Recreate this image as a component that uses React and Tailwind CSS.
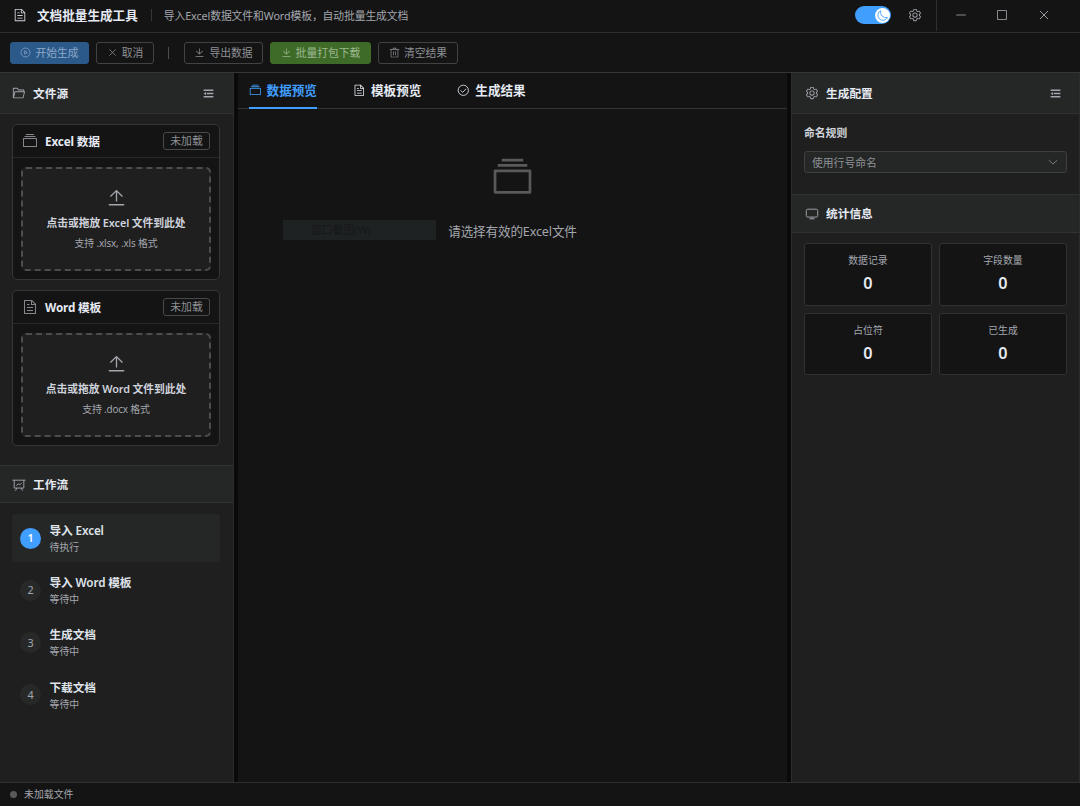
import { useState } from 'react';

// Icon outlines, all on a 1024 grid
const ICONS = {
  document:
    'M832 384H576V128H192v768h640zm-26.496-64L640 154.496V320zM160 64h480l256 256v608a32 32 0 0 1-32 32H160a32 32 0 0 1-32-32V96a32 32 0 0 1 32-32m160 448h384v64H320zm0-192h160v64H320zm0 384h384v64H320z',
  setting:
    'M600.704 64a32 32 0 0 1 30.464 22.208l35.2 109.376c14.784 7.232 28.928 15.36 42.432 24.512l112.384-24.192a32 32 0 0 1 34.432 15.36L944.32 364.8a32 32 0 0 1-4.032 37.504l-77.12 85.12a357 357 0 0 1 0 49.024l77.12 85.248a32 32 0 0 1 4.032 37.504l-88.704 153.6a32 32 0 0 1-34.432 15.296L708.8 803.904c-13.44 9.088-27.648 17.28-42.368 24.512l-35.264 109.376A32 32 0 0 1 600.704 960H423.296a32 32 0 0 1-30.464-22.208L357.696 828.48a352 352 0 0 1-42.56-24.64l-112.32 24.256a32 32 0 0 1-34.432-15.36L79.68 659.2a32 32 0 0 1 4.032-37.504l77.12-85.248a357 357 0 0 1 0-48.896l-77.12-85.248A32 32 0 0 1 79.68 364.8l88.704-153.6a32 32 0 0 1 34.432-15.296l112.32 24.256c13.568-9.152 27.776-17.408 42.56-24.64l35.2-109.312A32 32 0 0 1 423.232 64H600.64zm-23.424 64H446.72l-36.352 113.088-24.512 11.968a294 294 0 0 0-34.816 20.096l-22.656 15.36-116.224-25.088-65.28 113.152 79.68 88.192-1.92 27.136a293 293 0 0 0 0 40.192l1.92 27.136-79.808 88.192 65.344 113.152 116.224-25.024 22.656 15.296a294 294 0 0 0 34.816 20.096l24.512 11.968L446.72 896h130.688l36.48-113.152 24.448-11.904a288 288 0 0 0 34.752-20.096l22.592-15.296 116.288 25.024 65.28-113.152-79.744-88.192 1.92-27.136a293 293 0 0 0 0-40.256l-1.92-27.136 79.808-88.128-65.344-113.152-116.288 24.96-22.592-15.232a288 288 0 0 0-34.752-20.096l-24.448-11.904L577.344 128zM512 320a192 192 0 1 1 0 384 192 192 0 0 1 0-384m0 64a128 128 0 1 0 0 256 128 128 0 0 0 0-256',
  files:
    'M128 384v448h768V384zm-32-64h832a32 32 0 0 1 32 32v512a32 32 0 0 1-32 32H96a32 32 0 0 1-32-32V352a32 32 0 0 1 32-32m64-128h704v64H160zm96-128h512v64H256z',
  folder:
    'M878.08 448H241.92l-96 384h636.16zM832 384v-64H485.76L357.504 192H128v448l57.92-231.744A32 32 0 0 1 216.96 384zm-24.96 512H96a32 32 0 0 1-32-32V160a32 32 0 0 1 32-32h287.872l128.384 128H864a32 32 0 0 1 32 32v96h23.04a32 32 0 0 1 31.04 39.744l-112 448A32 32 0 0 1 807.04 896',
  download:
    'M160 832h704a32 32 0 1 1 0 64H160a32 32 0 1 1 0-64m384-253.696 236.288-236.352 45.248 45.248L508.8 704 192 387.2l45.248-45.248L480 584.704V128h64z',
  upload:
    'M160 832h704a32 32 0 1 1 0 64H160a32 32 0 1 1 0-64m384-578.304V704h-64V247.296L237.248 490.048 192 444.8 508.8 128l316.8 316.8-45.312 45.248z',
  trash:
    'M160 256H96a32 32 0 0 1 0-64h256V95.936a32 32 0 0 1 32-32h256a32 32 0 0 1 32 32V192h256a32 32 0 1 1 0 64h-64v672a32 32 0 0 1-32 32H192a32 32 0 0 1-32-32zm448-64v-64H416v64zM224 896h576V256H224zm192-128a32 32 0 0 1-32-32V416a32 32 0 0 1 64 0v320a32 32 0 0 1-32 32m192 0a32 32 0 0 1-32-32V416a32 32 0 0 1 64 0v320a32 32 0 0 1-32 32',
  fold: 'M896 192H128v128h768zm0 256H384v128h512zm0 256H128v128h768zM320 384 128 512l192 128z',
};

// Simple icons drawn with strokes instead of filled outlines
const LINES = {
  close: 'M218 218 806 806M806 218 218 806',
  play: 'M512 96a416 416 0 1 1 0 832 416 416 0 0 1 0-832M432 352v320l240-160z',
  check: 'M512 96a416 416 0 1 1 0 832 416 416 0 0 1 0-832M290 520l165 165 280-290',
  board: 'M32 160h960M160 160v576h704V160M352 736 256 928M672 736l96 192M320 560l130-140 110 90 150-160',
  monitor: 'M192 160h640a96 96 0 0 1 96 96v384a96 96 0 0 1-96 96H192a96 96 0 0 1-96-96V256a96 96 0 0 1 96-96M512 736v128M320 864h384',
  arrowDown: 'M150 350 512 690 874 350',
  minus: 'M100 512h824',
  square: 'M128 128h768v768H128z',
  moon: 'M380 130a400 400 0 1 0 530 530A420 420 0 0 1 380 130z',
};

function Icon({ name, className }) {
  if (LINES[name]) {
    return (
      <svg viewBox="0 0 1024 1024" fill="none" stroke="currentColor" strokeWidth="68" className={`shrink-0 ${className}`}>
        <path d={LINES[name]} />
      </svg>
    );
  }
  return (
    <svg viewBox="0 0 1024 1024" fill="currentColor" className={`shrink-0 ${className}`}>
      <path d={ICONS[name]} />
    </svg>
  );
}

function ToolButton({ icon, label, className }) {
  return (
    <button className={`flex h-[22px] items-center justify-center gap-[4px] rounded-[3px] border text-[10.8px] ${className}`}>
      <Icon name={icon} className="size-[11px]" />
      <span className="pt-[2px]">{label}</span>
    </button>
  );
}

function SectionHeader({ icon, title, foldable, className }) {
  return (
    <div className={`flex shrink-0 items-center border-b border-[#303232] bg-[#252727] ${className}`}>
      <Icon name={icon} className="size-[14px] text-[#a3a6ad]" />
      <span className="ml-[7px] pt-px text-[11.7px] font-bold text-[#e5eaf3]">{title}</span>
      {foldable && <Icon name="fold" className="ml-auto size-[13px] text-[#a3a6ad]" />}
    </div>
  );
}

function FileCard({ icon, title, text, hint }) {
  return (
    <div className="h-[156px] rounded-[5px] border border-[#343535] bg-[#141414]">
      <div className="flex h-[33px] items-center border-b border-[#282929] pr-[9px] pl-[9px]">
        <Icon name={icon} className="size-[16px] text-[#85878c]" />
        <span className="ml-[7px] pt-[2px] text-[11.7px] font-bold tracking-[-0.15px] text-[#e5eaf3]">{title}</span>
        <span className="ml-auto flex h-[18px] w-[47px] items-center justify-center rounded-[3px] border border-[#48494b] pt-px text-[10.8px] text-[#8d9095]">
          未加载
        </span>
      </div>
      <div className="mx-[8px] mt-[9px] flex h-[104px] flex-col items-center rounded-[5px] border-2 border-dashed border-[#4c4d4f] bg-[#1f1f1f]">
        <Icon name="upload" className="mt-[18px] size-[21px] text-[#a3a6ad]" />
        <p className="mt-[7px] text-[10.8px] leading-[16px] font-semibold tracking-[-0.08px] text-[#cfd3dc]">{text}</p>
        <p className="mt-[5px] text-[9.9px] leading-[14px] tracking-[-0.15px] text-[#a3a6ad]">{hint}</p>
      </div>
    </div>
  );
}

const STEPS = [
  { title: '导入 Excel', status: '待执行' },
  { title: '导入 Word 模板', status: '等待中' },
  { title: '生成文档', status: '等待中' },
  { title: '下载文档', status: '等待中' },
];

const TABS = [
  { icon: 'files', label: '数据预览' },
  { icon: 'document', label: '模板预览' },
  { icon: 'check', label: '生成结果' },
];

const STATS = [
  { label: '数据记录', value: 0 },
  { label: '字段数量', value: 0 },
  { label: '占位符', value: 0 },
  { label: '已生成', value: 0 },
];

export default function App() {
  const [tab, setTab] = useState(0);

  return (
    <div className="flex h-[806px] w-[1080px] flex-col overflow-hidden bg-[#141414] font-['Noto_Sans','Noto_Sans_CJK_SC',sans-serif] leading-none text-[#cfd3dc]">
      {/* Title bar */}
      <header className="flex h-[33px] shrink-0 items-center border-b border-[#2c2d2d] pb-[2px] pl-[13px]">
        <Icon name="document" className="size-[14px] text-[#cfd3dc]" />
        <h1 className="ml-[10px] pt-[2px] text-[12.6px] font-bold text-[#e5eaf3]">文档批量生成工具</h1>
        <div className="ml-[13px] h-[12px] w-px bg-[#363637]" />
        <span className="ml-[12px] pt-[2px] text-[10.8px] tracking-[-0.1px] text-[#a3a6ad]">
          导入Excel数据文件和Word模板，自动批量生成文档
        </span>
        <div className="ml-auto flex h-[18px] w-[36px] items-center justify-end rounded-full bg-[#409eff] pr-px">
          <div className="flex size-[15px] items-center justify-center rounded-full bg-white text-[#409eff]">
            <Icon name="moon" className="size-[13px]" />
          </div>
        </div>
        <Icon name="setting" className="ml-[17px] size-[14px] text-[#a3a6ad]" />
        <div className="ml-[14px] h-[31px] w-px bg-[#2f3030]" />
        <div className="flex w-[143px] items-center pl-[18px] text-[#a3a6ad]">
          <Icon name="minus" className="size-[12px]" />
          <Icon name="square" className="ml-[29px] size-[12px]" />
          <Icon name="close" className="ml-[29px] size-[14px]" />
        </div>
      </header>

      {/* Toolbar */}
      <div className="flex h-[40px] shrink-0 items-center border-b border-[#343535] pl-[10px]">
        <ToolButton icon="play" label="开始生成" className="w-[79px] border-[#2a598a] bg-[#2a598a] text-[#8fa9c8]" />
        <ToolButton icon="close" label="取消" className="ml-[7px] w-[58px] border-[#414243] text-[#8d9095]" />
        <div className="ml-[14px] h-[12px] w-px bg-[#4c4d4f]" />
        <ToolButton icon="download" label="导出数据" className="ml-[15px] w-[79px] border-[#414243] text-[#8d9095]" />
        <ToolButton icon="download" label="批量打包下载" className="ml-[7px] w-[101px] border-[#3e6b27] bg-[#3e6b27] text-[#9fb892]" />
        <ToolButton icon="trash" label="清空结果" className="ml-[7px] w-[80px] border-[#414243] text-[#8d9095]" />
      </div>

      <main className="flex min-h-0 flex-1 bg-[#0a0a0a]">
        {/* Left panel: source files and workflow */}
        <aside className="flex w-[234px] shrink-0 flex-col border-r border-[#2b2c2c] bg-[#1f1f1f]">
          <SectionHeader icon="folder" title="文件源" foldable className="h-[41px] pr-[18px] pl-[12px]" />
          <div className="flex flex-col gap-[10px] py-[10px] pr-[13px] pl-[12px]">
            <FileCard icon="files" title="Excel 数据" text="点击或拖放 Excel 文件到此处" hint="支持 .xlsx, .xls 格式" />
            <FileCard icon="document" title="Word 模板" text="点击或拖放 Word 文件到此处" hint="支持 .docx 格式" />
          </div>
          <SectionHeader icon="board" title="工作流" className="mt-[9px] h-[38px] border-t pt-px pl-[12px]" />
          <div className="flex flex-col gap-[4.3px] pt-[11px] pr-[13px] pl-[12px]">
            {STEPS.map((step, i) => (
              <div key={step.title} className={`flex h-[48px] items-center rounded-[4px] pl-[8px] ${i === 0 ? 'bg-[#252727]' : ''}`}>
                <span
                  className={`flex size-[21px] items-center justify-center rounded-full pt-px text-[10.8px] ${
                    i === 0 ? 'bg-[#409eff] font-semibold text-white' : 'bg-[#272828] text-[#a3a6ad]'
                  }`}
                >
                  {i + 1}
                </span>
                <div className="ml-[8.5px] pt-[0.6px]">
                  <p className="text-[11.7px] leading-[17px] font-semibold tracking-[-0.12px] text-[#dfe3ea]">{step.title}</p>
                  <p className="mt-px text-[9.9px] leading-[15px] text-[#a3a6ad]">{step.status}</p>
                </div>
              </div>
            ))}
          </div>
        </aside>

        {/* Center panel: previews */}
        <section className="relative mx-[4px] flex min-w-0 flex-1 flex-col bg-[#141414]">
          <nav className="flex h-[36px] shrink-0 gap-[36px] border-b border-[#343535] pl-[10.6px]">
            {TABS.map((item, i) => (
              <button
                key={item.label}
                onClick={() => setTab(i)}
                className={`-mb-px flex items-center gap-[5.4px] border-b-2 text-[12.6px] font-semibold ${
                  tab === i ? 'border-[#409eff] text-[#409eff]' : 'border-transparent text-[#e5eaf3]'
                }`}
              >
                <Icon name={item.icon} className="size-[12.6px]" />
                <span className="pt-[3px]">{item.label}</span>
              </button>
            ))}
          </nav>
          <div className="flex flex-col items-center pt-[47px]">
            <Icon name="files" className="size-[43px] text-[#58595b]" />
            <p className="mt-[24px] text-[12.6px] leading-[18px] tracking-[-0.15px] text-[#a3a6ad]">请选择有效的Excel文件</p>
          </div>
          <div className="absolute top-[147px] left-[45px] flex h-[20px] w-[153px] items-center bg-[#1f2223] pl-[28px] text-[10.8px] text-[#15181a]">
            窗口截图(W)
          </div>
        </section>

        {/* Right panel: config and statistics */}
        <aside className="flex w-[289px] shrink-0 flex-col border-x border-[#2b2c2c] bg-[#1f1f1f]">
          <SectionHeader icon="setting" title="生成配置" foldable className="h-[41px] pr-[17px] pl-[13px]" />
          <div className="h-[80px] px-[12px] pt-[11px]">
            <label className="block text-[10.8px] leading-[16px] font-semibold text-[#cfd3dc]">命名规则</label>
            <button className="mt-[10px] flex h-[22px] w-full items-center justify-between rounded-[3px] border border-[#3d3f40] bg-[#252727] pr-[7px] pl-[7px] text-[10.8px] text-[#8d9095]">
              <span className="pt-[2px]">使用行号命名</span>
              <Icon name="arrowDown" className="size-[12px]" />
            </button>
          </div>
          <SectionHeader icon="monitor" title="统计信息" className="h-[39px] border-t pl-[13px]" />
          <div className="grid grid-cols-2 gap-[7px] px-[12px] pt-[10px]">
            {STATS.map((stat) => (
              <div key={stat.label} className="flex h-[62.5px] flex-col items-center rounded-[3px] border border-[#303131] bg-[#141414] pt-[9px]">
                <span className="text-[9.9px] leading-[15px] text-[#a3a6ad]">{stat.label}</span>
                <span className="mt-[4px] text-[16.2px] leading-[22px] font-semibold text-[#e5eaf3]">{stat.value}</span>
              </div>
            ))}
          </div>
        </aside>
      </main>

      {/* Status bar */}
      <footer className="flex h-[24px] shrink-0 items-center border-t border-[#2f3030] pl-[10px]">
        <span className="size-[7px] rounded-full bg-[#58595b]" />
        <span className="ml-[7px] pt-px text-[9.9px] text-[#a3a6ad]">未加载文件</span>
      </footer>
    </div>
  );
}
